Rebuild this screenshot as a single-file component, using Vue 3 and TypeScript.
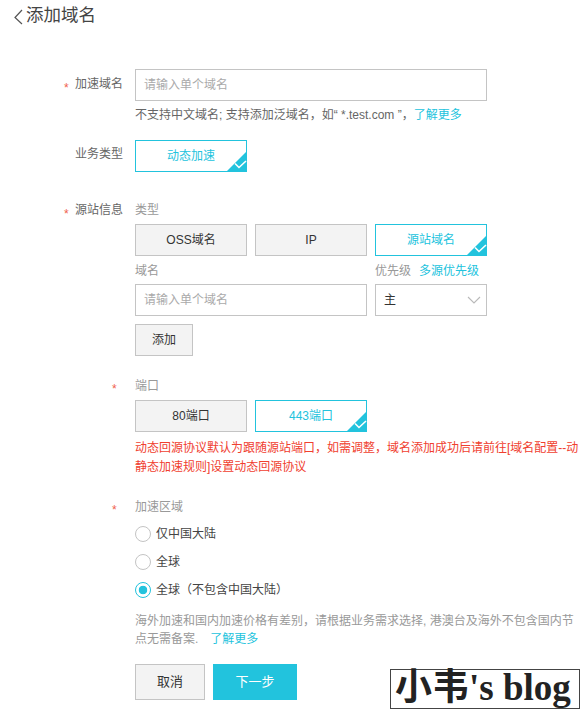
<script setup lang="ts">
</script>

<template>
  <div class="page">
    <header class="title">
      <svg class="back" width="9" height="16" viewBox="0 0 9 16"><path d="M8 1 L1 8.5 L8 15" fill="none" stroke="#555" stroke-width="1.2" /></svg>
      <span>添加域名</span>
    </header>

    <div class="row r1">
      <div class="label"><i>*</i>加速域名</div>
      <div class="body">
        <div class="input wide">请输入单个域名</div>
        <p class="hint">不支持中文域名; 支持添加泛域名，如“ *.test.com ”，<a>了解更多</a></p>
      </div>
    </div>

    <div class="row r2">
      <div class="label">业务类型</div>
      <div class="body">
        <button class="opt on">动态加速
          <svg class="tick" width="21" height="21" viewBox="0 0 21 21"><path d="M21 0 V21 H0 Z" fill="#22c3dd" /><path d="M9 12.5 L13 16.5 L20 10" fill="none" stroke="#fff" stroke-width="1.6" /></svg>
        </button>
      </div>
    </div>

    <div class="row r3">
      <div class="label"><i>*</i>源站信息</div>
      <div class="body">
        <div class="sub">类型</div>
        <div class="opts">
          <button class="opt">OSS域名</button>
          <button class="opt">IP</button>
          <button class="opt on">源站域名
            <svg class="tick" width="21" height="21" viewBox="0 0 21 21"><path d="M21 0 V21 H0 Z" fill="#22c3dd" /><path d="M9 12.5 L13 16.5 L20 10" fill="none" stroke="#fff" stroke-width="1.6" /></svg>
          </button>
        </div>
        <div class="fields">
          <div>
            <div class="sub s2">域名</div>
            <div class="input mid">请输入单个域名</div>
          </div>
          <div>
            <div class="sub s2">优先级<a class="multi">多源优先级</a></div>
            <div class="input sel"><span>主</span>
              <svg width="14" height="8" viewBox="0 0 14 8"><path d="M1 1 L7 7 L13 1" fill="none" stroke="#b9b9b9" stroke-width="1.1" /></svg>
            </div>
          </div>
        </div>
        <button class="add">添加</button>
      </div>
    </div>

    <div class="row r4">
      <div class="label star"><i>*</i></div>
      <div class="body">
        <div class="sub">端口</div>
        <div class="opts">
          <button class="opt">80端口</button>
          <button class="opt on">443端口
            <svg class="tick" width="21" height="21" viewBox="0 0 21 21"><path d="M21 0 V21 H0 Z" fill="#22c3dd" /><path d="M9 12.5 L13 16.5 L20 10" fill="none" stroke="#fff" stroke-width="1.6" /></svg>
          </button>
        </div>
        <p class="warn">动态回源协议默认为跟随源站端口，如需调整，域名添加成功后请前往[域名配置--动静态加速规则]设置动态回源协议</p>
      </div>
    </div>

    <div class="row r5">
      <div class="label star"><i>*</i></div>
      <div class="body">
        <div class="sub">加速区域</div>
        <div class="radios">
          <label class="radio"><b></b>仅中国大陆</label>
          <label class="radio"><b></b>全球</label>
          <label class="radio sel-r"><b></b>全球（不包含中国大陆）</label>
        </div>
        <p class="note">海外加速和国内加速价格有差别，请根据业务需求选择, 港澳台及海外不包含国内节点无需备案.<a class="more">了解更多</a></p>
        <div class="actions">
          <button class="cancel">取消</button>
          <button class="next">下一步</button>
        </div>
      </div>
    </div>

    <div class="mark">小韦's blog</div>
  </div>
</template>

<style>
html, body { margin: 0; background: #fff; }
</style>

<style scoped>
.page {
  position: relative;
  width: 581px;
  height: 711px;
  overflow: hidden;
  background: #fff;
  font: 12px/18px "Liberation Sans", "Noto Sans CJK SC", sans-serif;
  color: #333;
}
.title {
  display: flex;
  align-items: center;
  gap: 3px;
  height: 30px;
  padding-left: 14px;
  font-size: 17.5px;
  color: #444;
}
.back { margin-top: 3px; }
.row { display: flex; }
.label {
  position: relative;
  width: 123px;
  margin-right: 12px;
  padding-left: 75px;
  box-sizing: border-box;
  flex: none;
  color: #666;
}
.label i {
  position: absolute;
  left: 64px;
  font-style: normal;
  color: #f0604d;
}
.r1 .label i { top: 10px; }
.r3 .label i { top: 4px; }
.star i { left: 112px; top: 3px; }
.body { flex: none; width: 352px; }
.r1 { margin-top: 39px; }
.r1 .label { padding-top: 6px; }
.r2 { margin-top: 16px; }
.r2 .label { padding-top: 5px; }
.r3 { margin-top: 28px; padding-top: 1px; }
.r3 .opts { margin-top: 5px; }
.r4 { margin-top: 20px; padding-top: 1px; }
.r4 .opts { margin-top: 5px; }
.r5 { margin-top: 21px; }
.input {
  box-sizing: border-box;
  height: 32px;
  border: 1px solid #c4c4c4;
  padding: 0 8px;
  line-height: 30px;
  color: #aaa;
}
.input.sel { color: #333; }
.wide { width: 352px; }
.mid { width: 232px; }
.sel {
  width: 112px;
  display: flex;
  align-items: center;
  justify-content: space-between;
  padding-right: 5px;
}
.hint { margin: 5px 0 0; color: #666; white-space: nowrap; }
a { color: #22c3dd; }
.sub { color: #999; height: 18px; }
.opts { display: flex; gap: 8px; margin-top: 6px; }
.opt {
  position: relative;
  box-sizing: border-box;
  width: 112px;
  height: 32px;
  padding: 0;
  border: 1px solid #c4c4c4;
  background: #f3f3f3;
  color: #333;
  font: inherit;
}
.opt.on {
  border-color: #22c3dd;
  background: #fff;
  color: #22c3dd;
}
.tick { position: absolute; right: -1px; bottom: -1px; display: block; }
.fields { display: flex; gap: 8px; margin-top: 6px; }
.s2 { margin-bottom: 4px; height: 18px; }
.multi { margin-left: 8px; }
.add {
  display: block;
  box-sizing: border-box;
  width: 58px;
  height: 32px;
  margin-top: 8px;
  padding: 0;
  border: 1px solid #c4c4c4;
  background: #f3f3f3;
  color: #333;
  font: inherit;
}
.warn { width: 444px; margin: 7px 0 0; color: #f0402f; line-height: 19px; }
.radios { display: flex; flex-direction: column; gap: 10px; margin-top: 9px; }
.radio { display: flex; align-items: center; gap: 5px; color: #444; }
.radio b {
  box-sizing: border-box;
  width: 16px;
  height: 16px;
  border: 1px solid #c4c4c4;
  border-radius: 50%;
  flex: none;
}
.sel-r b {
  border-color: #22c3dd;
  background: radial-gradient(circle, #22c3dd 0 4px, #fff 4.6px);
}
.note { width: 444px; margin: 13px 0 0; color: #999; }
.more { margin-left: 12px; }
.actions { display: flex; gap: 8px; margin-top: 16px; }
.cancel, .next {
  box-sizing: border-box;
  height: 36px;
  padding: 0;
  font: inherit;
  font-size: 13px;
}
.cancel { width: 70px; border: 1px solid #c4c4c4; background: #f3f3f3; color: #333; }
.next { width: 84px; border: 0; background: #22c3dd; color: #fff; }
.mark {
  position: absolute;
  left: 390px;
  top: 669px;
  box-sizing: border-box;
  width: 190px;
  height: 40px;
  padding-left: 4px;
  border: 1px solid #444;
  background: #fff;
  color: #222;
  font: bold 37px/36px "Liberation Serif", "Noto Sans CJK SC", serif;
  white-space: nowrap;
}
</style>
